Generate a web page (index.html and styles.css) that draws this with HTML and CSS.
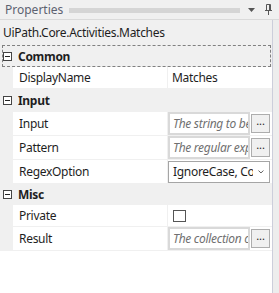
FILE: index.html
```html
<!DOCTYPE html>
<html lang="en">
<head>
    <meta charset="UTF-8">
    <title>Properties</title>
    <link rel="stylesheet" href="styles.css">
</head>
<body>
    <div class="titlebar">
        <span class="title">Properties</span>
        <span class="grip"></span>
        <svg class="menu" width="7" height="4" viewBox="0 0 7 4"><path d="M0 0H7L3.5 4Z" fill="#555"/></svg>
        <svg class="pin" width="7" height="11" viewBox="0 0 7 11">
            <path d="M1.5 0.5H5.5M1.5 0.5V6.5M5.5 0.5V6.5M4.5 1V6.5M0 6.5H7M3.5 7V11" stroke="#555" fill="none"/>
        </svg>
    </div>
    <div class="panel">
        <div class="typename">UiPath.Core.Activities.Matches</div>
        <div class="grid">
            <div class="cat focused"><span class="toggle"></span>Common</div>
            <div class="row short">
                <div class="name">DisplayName</div>
                <div class="value text">Matches</div>
            </div>

            <div class="cat tall"><span class="toggle"></span>Input</div>
            <div class="row">
                <div class="name">Input</div>
                <div class="value"><span class="box">The string to be searched</span><span class="dots">...</span></div>
            </div>
            <div class="row">
                <div class="name">Pattern</div>
                <div class="value"><span class="box">The regular expression</span><span class="dots">...</span></div>
            </div>
            <div class="row">
                <div class="name">RegexOption</div>
                <div class="value"><span class="combo"><span class="combo-text">IgnoreCase, Compiled</span><svg width="6" height="4" viewBox="0 0 6 4"><path d="M0.5 0.5L3 3L5.5 0.5" stroke="#555" fill="none"/></svg></span></div>
            </div>

            <div class="cat thin"><span class="toggle"></span>Misc</div>
            <div class="row short">
                <div class="name">Private</div>
                <div class="value"><span class="check"></span></div>
            </div>
            <div class="row">
                <div class="name">Result</div>
                <div class="value"><span class="box">The collection of matches</span><span class="dots">...</span></div>
            </div>
        </div>
    </div>
</body>
</html>
```

FILE: styles.css
```css
* {
    box-sizing: border-box;
}

body {
    margin: 0;
    background: #ededed;
    font-family: "Noto Sans", "Open Sans", sans-serif;
    font-size: 12px;
    letter-spacing: -0.3px;
    color: #1e1e1e;
}

.titlebar {
    height: 20px;
    display: flex;
    align-items: center;
    padding: 0 7px 0 5px;
    background: #f0f0f0;
    border-bottom: 1px solid #dadada;
}

.title {
    color: #5d6270;
    letter-spacing: 0;
}

.grip {
    flex: 1;
    height: 5px;
    margin: 1px 8px 0 6px;
    background-image: radial-gradient(circle, #b5b5b5 0.6px, transparent 0.8px);
    background-size: 2px 2px;
}

.menu {
    margin: 1px 10px 0 0;
}

.pin {
    margin-top: -1px;
}

.panel {
    width: 273px;
    height: 273px;
    background: #fff;
    border-right: 1px solid #cccedb;
}

.typename {
    height: 25px;
    line-height: 25px;
    padding-left: 3px;
    background: #f0f0f0;
}

.grid {
    background: #f0f0f0;
}

.cat {
    height: 22px;
    font-weight: bold;
    display: flex;
    align-items: center;
    padding-left: 3px;
}

.cat.tall {
    height: 23px;
}

.cat.thin {
    height: 21px;
}

.cat.focused {
    outline: 1px dashed #808080;
    outline-offset: -1px;
    margin-left: 2px;
    margin-right: 1px;
    padding-left: 1px;
}

.toggle {
    width: 9px;
    height: 9px;
    border: 1px solid #444;
    margin-right: 6px;
    position: relative;
    background: #fff;
}

.toggle::after {
    content: "";
    position: absolute;
    left: 1px;
    top: 3px;
    width: 5px;
    height: 1px;
    background: #222;
}

.row {
    display: flex;
    height: 24px;
    margin-left: 13px;
    background: #fff;
    border-bottom: 1px solid #f0f0f0;
}

.row.short {
    height: 22px;
}

.name {
    width: 155px;
    padding-left: 6px;
    display: flex;
    align-items: center;
    border-right: 1px solid #f0f0f0;
}

.value {
    flex: 1;
    display: flex;
    align-items: center;
    min-width: 0;
    padding-right: 2px;
}

.value.text {
    padding-left: 4px;
}

.box {
    width: 83px;
    height: 23px;
    line-height: 19px;
    border: 2px solid #d9d9d9;
    padding-left: 3px;
    font-style: italic;
    color: #707070;
    white-space: nowrap;
    overflow: hidden;
}

.dots {
    width: 19px;
    height: 19px;
    line-height: 12px;
    margin-left: 1px;
    border: 1px solid #adadad;
    background: #f0f0f0;
    text-align: center;
    font-size: 11px;
    letter-spacing: 0;
}

.combo {
    width: 102px;
    height: 22px;
    border: 1px solid #a5a5a5;
    padding: 0 5px 0 4px;
    display: flex;
    align-items: center;
}

.combo-text {
    width: 82px;
    white-space: nowrap;
    overflow: hidden;
}

.combo svg {
    margin-left: 5px;
}

.check {
    width: 13px;
    height: 12px;
    border: 1px solid #555;
    margin: 1px 0 0 5px;
}
```
